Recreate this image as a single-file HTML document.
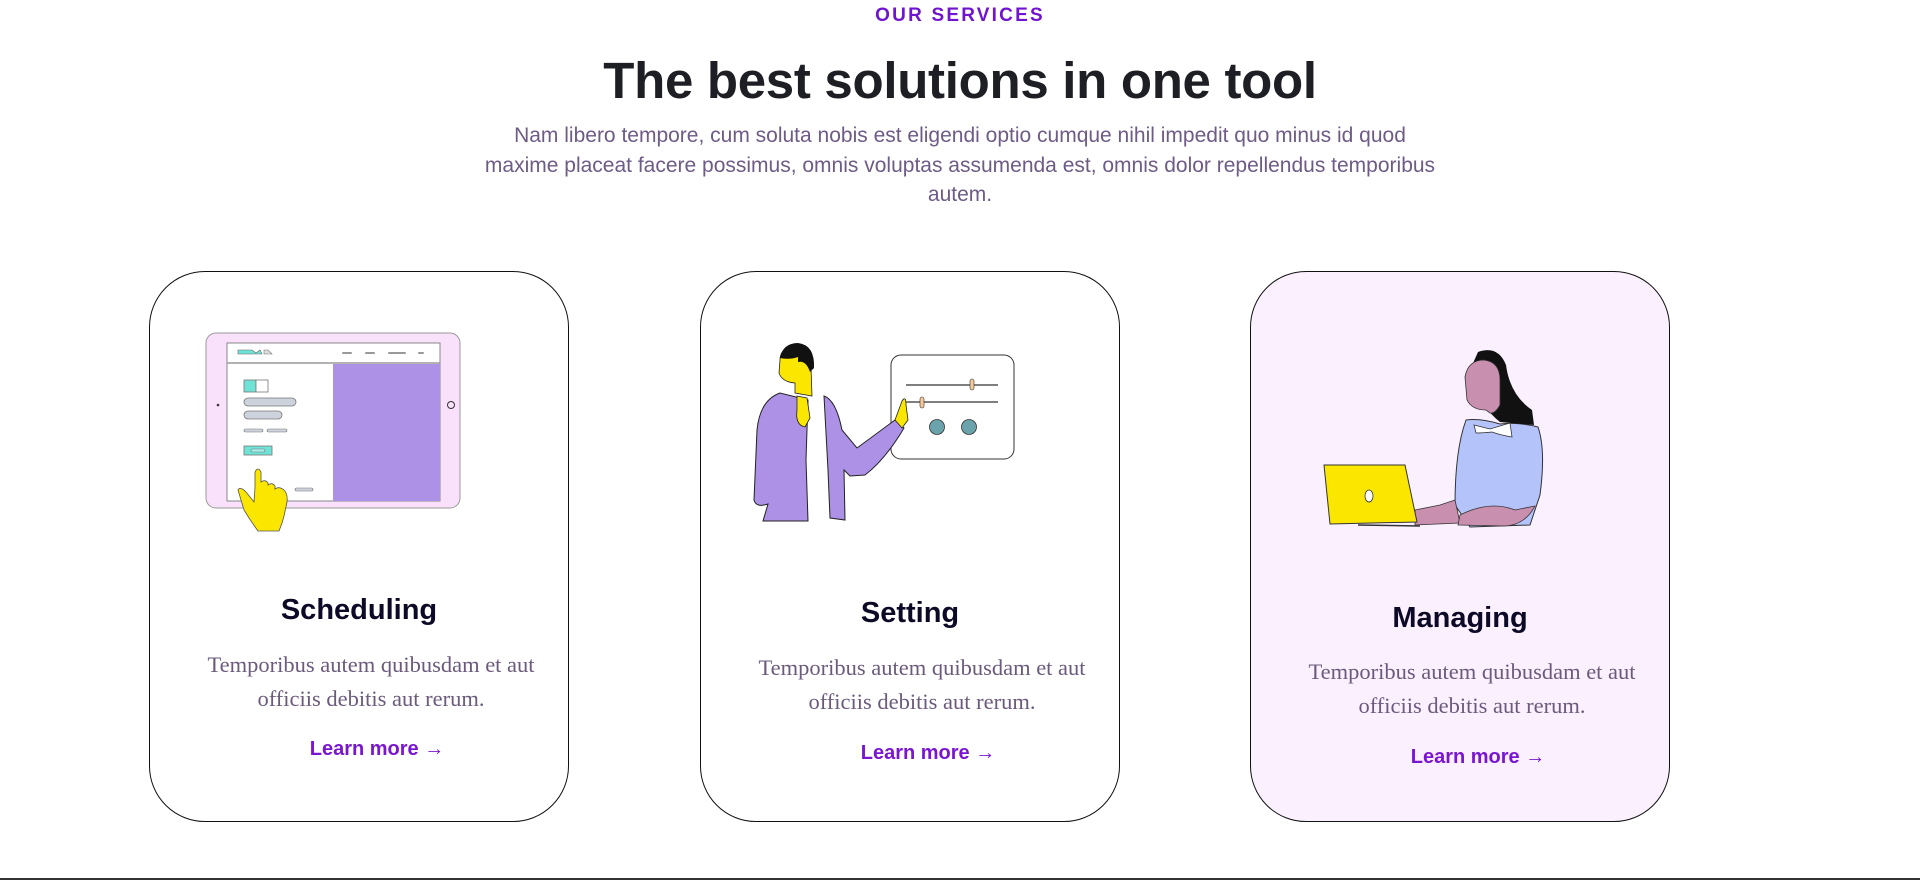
<!DOCTYPE html>
<html><head><meta charset="utf-8"><style>
*{margin:0;padding:0;box-sizing:border-box}
body{width:1920px;height:880px;background:#fff;position:relative;overflow:hidden;font-family:"Liberation Sans",sans-serif}
.abs{position:absolute}
.c{text-align:center}
.tag{left:0;width:1920px;top:4px;font-size:19px;font-weight:bold;letter-spacing:2.2px;color:#7014cf;line-height:24px}
h1{position:absolute;left:0;width:1920px;top:50px;font-size:51px;letter-spacing:-0.3px;color:#1e1f24;text-align:center;line-height:62px}
.p{left:400px;width:1120px;top:121px;font-size:21px;line-height:29.5px;color:#6e5b86;text-align:center}
.card{position:absolute;top:271px;width:420px;height:551px;border:1.3px solid #111;border-radius:56px}
.t{position:absolute;width:420px;text-align:center;font-size:29px;font-weight:bold;color:#0c0a26;line-height:34px}
.d{position:absolute;width:420px;text-align:center;font-family:"Liberation Serif",serif;font-size:22.5px;line-height:34px;color:#6b5a7b}
.l{position:absolute;width:420px;text-align:center;font-size:20px;font-weight:bold;color:#7a16d0;line-height:24px}
.line{left:0;top:878px;width:1920px;height:2px;background:#333}
</style></head><body>
<div class="abs tag c">OUR SERVICES</div>
<h1>The best solutions in one tool</h1>
<div class="abs p">Nam libero tempore, cum soluta nobis est eligendi optio cumque nihil impedit quo minus id quod<br>maxime placeat facere possimus, omnis voluptas assumenda est, omnis dolor repellendus temporibus<br>autem.</div>

<div class="card" style="left:149px"></div>
<div class="card" style="left:700px"></div>
<div class="card" style="left:1250px;background:#fbf0fd"></div>

<svg class="abs" style="left:0;top:0" width="1920" height="880" viewBox="0 0 1920 880">
<!-- tablet -->
<rect x="206" y="333" width="254" height="175" rx="10" fill="#f9e1fb" stroke="#999" stroke-width="1"/>
<rect x="227" y="343" width="213" height="158" fill="#fff" stroke="#888" stroke-width="1"/>
<line x1="227" y1="363" x2="440" y2="363" stroke="#999" stroke-width="1.5"/>
<rect x="333" y="364" width="107" height="137" fill="#ad91e6"/>
<path d="M238 350 L252 350 L256 353 L260 350 L262 354 L238 354Z" fill="#6fe3d6" stroke="#666" stroke-width="0.6"/>
<path d="M264 350 L268 350 L272 354 L264 354Z" fill="#ddd" stroke="#777" stroke-width="0.6"/>
<g stroke="#999" stroke-width="2" stroke-linecap="round"><line x1="343" y1="353" x2="351" y2="353"/><line x1="366" y1="353" x2="374" y2="353"/><line x1="389" y1="353" x2="405" y2="353"/><line x1="419" y1="353" x2="423" y2="353"/></g>
<rect x="244" y="380" width="12" height="12" fill="#6fe3d6" stroke="#777" stroke-width="0.8"/>
<rect x="256" y="380" width="12" height="12" fill="#fff" stroke="#777" stroke-width="0.8"/>
<rect x="244" y="398" width="52" height="8" rx="4" fill="#cdd3dd" stroke="#777" stroke-width="0.8"/>
<rect x="244" y="411" width="38" height="8" rx="4" fill="#cdd3dd" stroke="#777" stroke-width="0.8"/>
<rect x="244" y="429" width="19" height="3" rx="1.5" fill="#cdd3dd" stroke="#777" stroke-width="0.6"/>
<rect x="267" y="429" width="20" height="3" rx="1.5" fill="#cdd3dd" stroke="#777" stroke-width="0.6"/>
<rect x="244" y="446" width="28" height="9" fill="#6fe3d6" stroke="#777" stroke-width="0.8"/>
<rect x="251" y="449" width="14" height="3" rx="1.5" fill="#aee" stroke="#777" stroke-width="0.6"/>
<rect x="295" y="488" width="18" height="3" rx="1.5" fill="#cdd3dd" stroke="#777" stroke-width="0.6"/>
<circle cx="218" cy="405" r="1.3" fill="#333"/>
<circle cx="451" cy="405" r="3.5" fill="none" stroke="#333" stroke-width="1"/>
<path d="M255 488 L255 472 Q258 466 261 472 L261 482 Q265 479 268 483 L268 485 Q272 482 275 486 L275 489 Q279 486 284 490 Q288 494 287 502 L284 516 Q282 524 279 531 L258 531 Q250 520 244 510 L238 490 Q240 486 246 492 L254 502Z" fill="#fbe600" stroke="#555" stroke-width="0.8"/>
<!-- setting -->
<rect x="891" y="355" width="123" height="104" rx="10" fill="#fff" stroke="#333" stroke-width="1"/>
<line x1="906" y1="385" x2="998" y2="385" stroke="#333" stroke-width="1.3"/>
<line x1="906" y1="402" x2="998" y2="402" stroke="#333" stroke-width="1.3"/>
<rect x="970" y="379" width="4" height="11" rx="2" fill="#f5c99a" stroke="#333" stroke-width="0.6"/>
<rect x="920" y="397" width="4" height="11" rx="2" fill="#f5c99a" stroke="#333" stroke-width="0.6"/>
<circle cx="937" cy="427" r="7.5" fill="#6aa3ab" stroke="#333" stroke-width="0.8"/>
<circle cx="969" cy="427" r="7.5" fill="#6aa3ab" stroke="#333" stroke-width="0.8"/>
<path d="M795 392 L810 396 L830 398 L832 505 L802 506Z" fill="#fff"/>
<path d="M780 393 Q760 400 757 430 L754 500 Q756 508 768 504 L763 521 L808 521 L806 460 L808 400Z" fill="#ad91e6" stroke="#222" stroke-width="1"/>
<path d="M824 396 Q836 400 842 430 L857 448 L895 420 L904 428 Q885 460 865 475 L850 476 L844 470 L845 520 L830 518 L828 470Z" fill="#ad91e6" stroke="#222" stroke-width="1"/>
<path d="M895 420 L902 401 Q906 395 906 405 L908 420 L902 428Z" fill="#fbe600" stroke="#222" stroke-width="0.8"/>
<path d="M797 396 L807 398 L810 418 L805 427 Q795 425 797 410Z" fill="#fbe600" stroke="#222" stroke-width="0.8"/>
<path d="M780 360 Q780 347 796 346 Q812 350 811 368 L812 396 L795 393 L795 383 Q782 382 779 373Z" fill="#fbe600" stroke="#222" stroke-width="0.8"/>
<path d="M780 358 Q783 343 798 343 Q815 345 814 368 L810 372 Q806 360 798 362 L798 357 Q790 360 780 358Z" fill="#111"/>
<!-- managing -->
<path d="M1466 420 Q1480 418 1500 424 Q1520 422 1538 427 Q1546 450 1540 495 L1530 525 L1470 527 L1455 505 Q1455 450 1466 420Z" fill="#b5c3fb" stroke="#333" stroke-width="1"/>
<path d="M1478 352 Q1498 345 1506 365 Q1510 395 1532 410 L1534 425 L1500 422 Q1478 405 1470 370Z" fill="#111"/>
<path d="M1465 377 Q1468 360 1484 360 Q1500 362 1500 380 L1500 405 Q1495 414 1490 413 L1486 410 Q1472 410 1467 400Z" fill="#c98fae" stroke="#333" stroke-width="0.8"/>
<path d="M1474 425 L1490 429 L1510 423 L1512 437 Q1500 435 1492 432 Q1483 433 1476 433Z" fill="#fff" stroke="#333" stroke-width="0.8"/>
<path d="M1415 510 L1440 505 L1455 500 L1460 523 L1415 525Z" fill="#c98fae" stroke="#333" stroke-width="0.8"/>
<path d="M1460 515 Q1490 500 1515 510 L1535 506 Q1525 525 1505 526 L1458 525Z" fill="#c98fae" stroke="#333" stroke-width="0.8"/>
<path d="M1324 465 L1405 465 L1417 522 L1330 524Z" fill="#fbe600" stroke="#333" stroke-width="1"/>
<line x1="1358" y1="525" x2="1420" y2="526" stroke="#333" stroke-width="1.5"/>
<ellipse cx="1369" cy="496" rx="4" ry="6" fill="#fff" stroke="#333" stroke-width="0.8"/>
</svg>

<div class="t" style="left:149px;top:593px">Scheduling</div>
<div class="d" style="left:161px;top:648px">Temporibus autem quibusdam et aut<br>officiis debitis aut rerum.</div>
<div class="l" style="left:167px;top:737px">Learn more →</div>

<div class="t" style="left:700px;top:596px">Setting</div>
<div class="d" style="left:712px;top:651px">Temporibus autem quibusdam et aut<br>officiis debitis aut rerum.</div>
<div class="l" style="left:718px;top:741px">Learn more →</div>

<div class="t" style="left:1250px;top:601px">Managing</div>
<div class="d" style="left:1262px;top:655px">Temporibus autem quibusdam et aut<br>officiis debitis aut rerum.</div>
<div class="l" style="left:1268px;top:745px">Learn more →</div>

<div class="abs line"></div>
</body></html>
